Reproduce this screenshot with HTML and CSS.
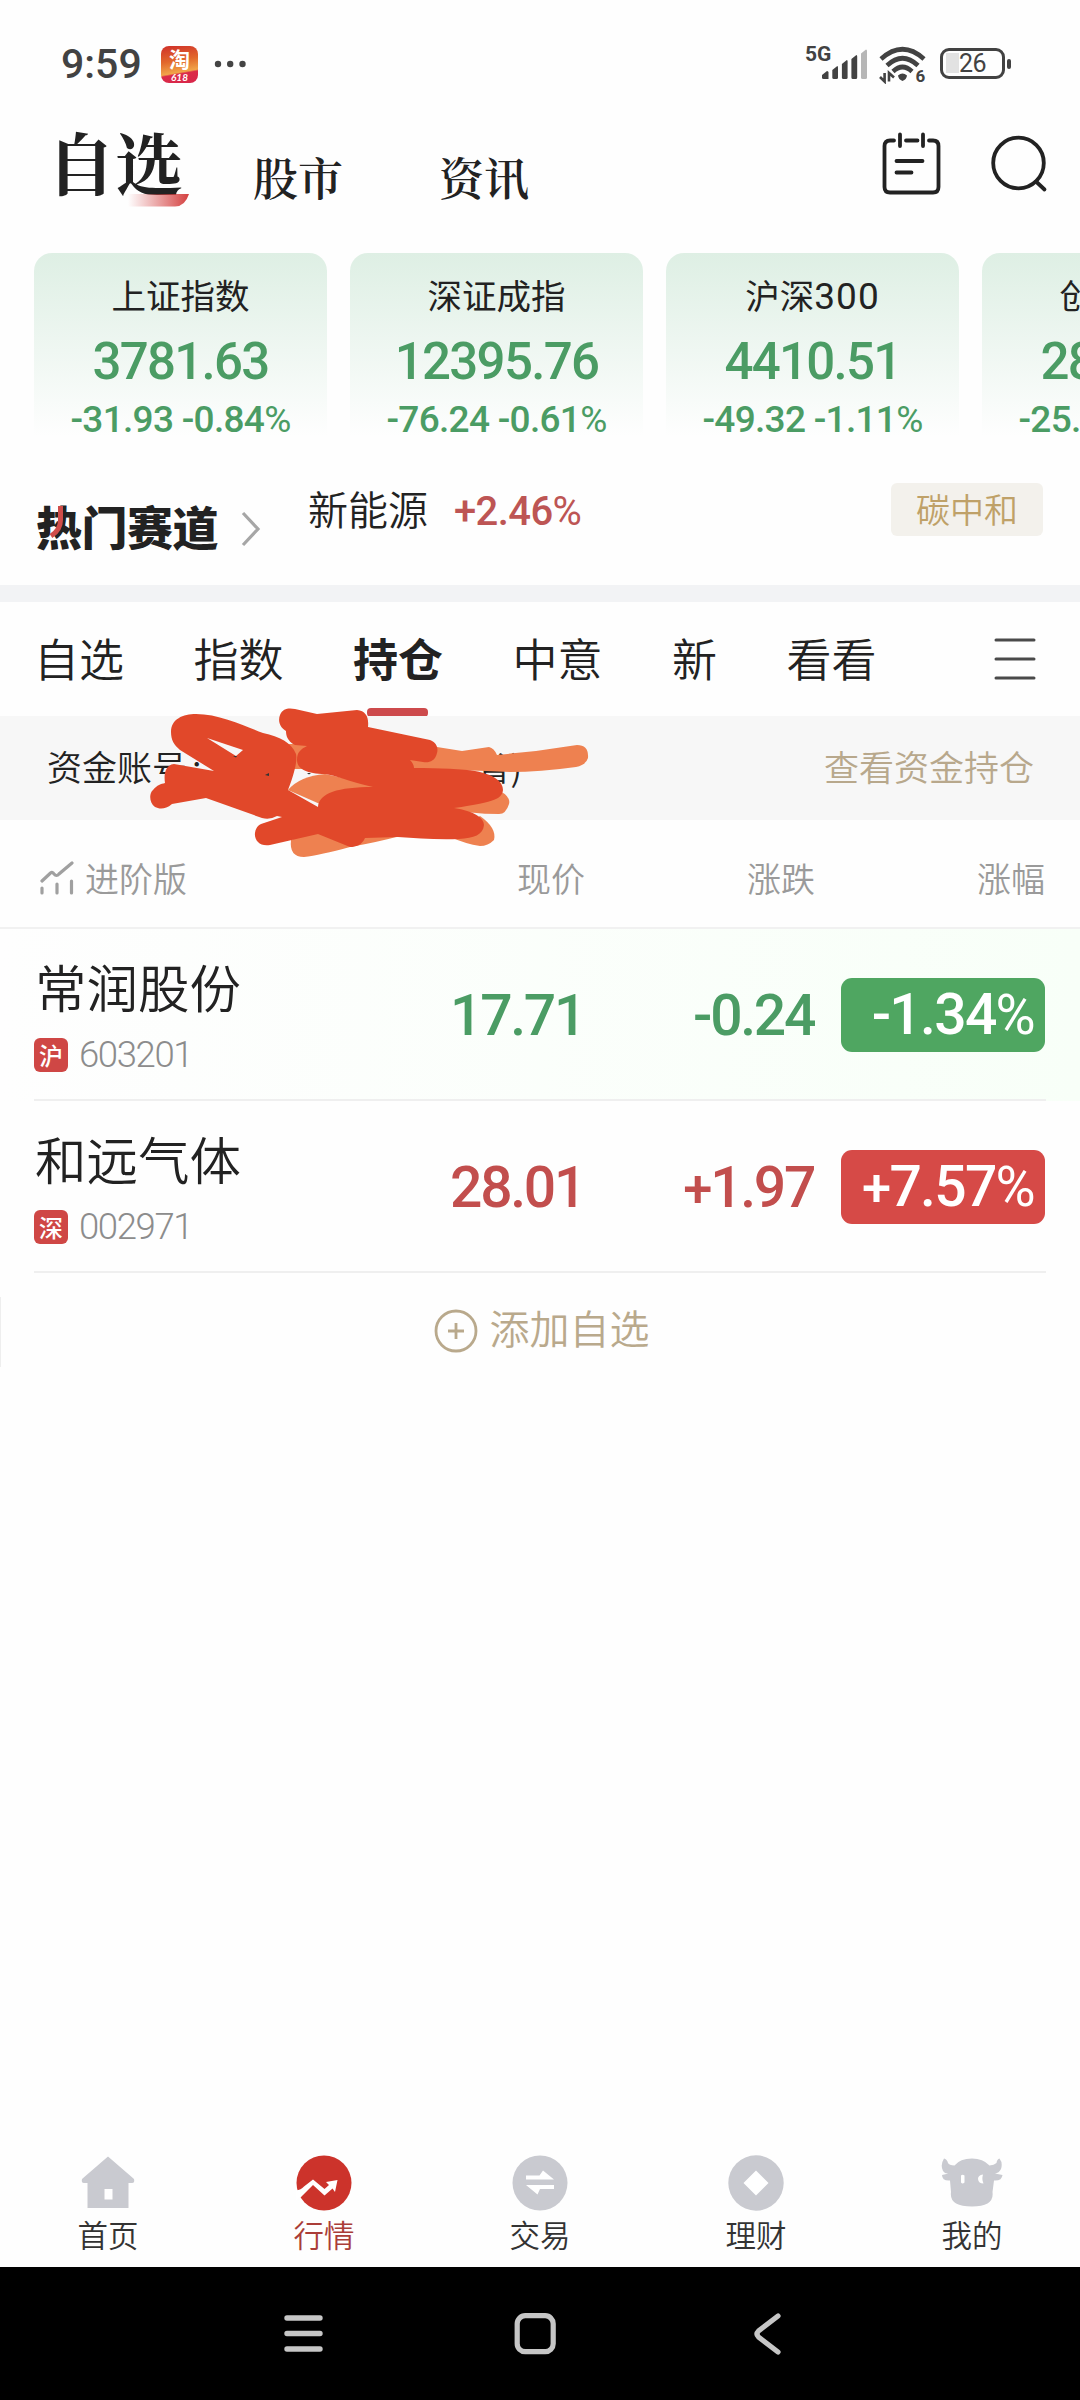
FILE: index.html
```html
<!DOCTYPE html>
<html lang="zh-CN">
<head>
<meta charset="utf-8">
<title>自选行情</title>
<link rel="stylesheet" href="styles.css">
</head>
<body>
<div class="screen">
  <header class="status">
    <span class="clock">9:59</span>
    <span class="app-icon"><b class="app-char">淘</b><i class="app-sale">618</i></span>
    <svg class="dots" width="34" height="8" viewBox="0 0 34 8"><g fill="#444"><circle cx="4" cy="4" r="3.2"/><circle cx="16.200" cy="4" r="3.200"/><circle cx="28.500" cy="4" r="3.200"/></g></svg>
    <span class="net">5G</span>
    <svg class="signal" width="46" height="32" viewBox="0 0 46 32"><g fill="#424242"><path d="M0 27l5-4q1.500 0 1.500 1.500V31h-5q-1.500 0-1.500-1.500z"/><path d="M10.300 22l5-4q.7 0 .7 1.500V29.500q0 1.500-1.500 1.500h-2.700q-1.500 0-1.500-1.500z"/><path d="M19.900 16l5-4q.7 0 .7 1.500V29.500q0 1.500-1.500 1.500h-2.700q-1.500 0-1.500-1.500z"/><path d="M29.400 11l5-4q.8 0 .8 1.500V29.500q0 1.500-1.500 1.500h-2.800q-1.500 0-1.500-1.500z"/></g><path fill="#b6b6b6" d="M39 5.500l5-4q1 0 1 1.500V29.500q0 1.500-1.500 1.500h-3q-1.500 0-1.500-1.500z"/></svg>
    <svg class="wifi" width="48" height="38" viewBox="0 0 48 38"><g fill="none" stroke="#424242" stroke-width="4.600"><path d="M2 13Q23.500-6.500 45 13"/><path d="M8 19.500Q23.500 5 39 19.500"/><path d="M14 25.500Q23.500 16.500 33 25.500"/></g><path d="M19 29.500q4.500-4 9 0q-.5 4-4.500 5.500q-4-1.500-4.500-5.500z" fill="#424242"/><path d="M5.600 27v8.500L1 31M10 35.500V27l5 4.500" fill="none" stroke="#424242" stroke-width="2.600"/><text x="36.500" y="35.500" class="wifi-gen">6</text></svg>
    <span class="battery"><span class="battery-text">26</span></span><span class="battery-tip"></span>
  </header>

  <nav class="top">
    <div class="top-tab top-tab-on">自选<svg class="swoosh" width="64" height="13" viewBox="0 0 64 13"><defs><linearGradient id="sw"><stop offset="0" stop-color="#d64a4c" stop-opacity="0"/><stop offset="1" stop-color="#d4403f"/></linearGradient></defs><path d="M0 0H61Q57 12.500 47 12.500H0z" fill="url(#sw)"/></svg></div>
    <div class="top-tab">股市</div>
    <div class="top-tab">资讯</div>
    <svg class="ico-note" width="60" height="64" viewBox="0 0 60 64"><g fill="none" stroke="#222" stroke-width="3.800" stroke-linecap="round"><path d="M13 8.500H9Q3.500 8.500 3.500 14V55Q3.500 60.500 9 60.500H52Q57.500 60.500 57.500 55V14Q57.500 8.500 52 8.500H48M25 8.500H36.500M19 2.500V14M42 2.500V14M15.500 29H41.500M15.500 40.500H30.500"/></g></svg>
    <svg class="ico-search" width="58" height="60" viewBox="0 0 58 60"><g fill="none" stroke="#222" stroke-width="3.800" stroke-linecap="round"><circle cx="27.500" cy="28" r="25.300"/><path d="M45 46.500L53.500 54.500"/></g></svg>
  </nav>

  <section class="cards">
    <div class="card"><div class="card-name">上证指数</div><div class="card-val">3781.63</div><div class="card-chg">-31.93 -0.84<i>%</i></div></div>
    <div class="card"><div class="card-name">深证成指</div><div class="card-val">12395.76</div><div class="card-chg">-76.24 -0.61<i>%</i></div></div>
    <div class="card"><div class="card-name">沪深<span class="num">300</span></div><div class="card-val">4410.51</div><div class="card-chg">-49.32 -1.11<i>%</i></div></div>
    <div class="card"><div class="card-name">创业板指</div><div class="card-val">2834.62</div><div class="card-chg">-25.09 -0.88<i>%</i></div></div>
  </section>

  <section class="hot">
    <div class="hot-title">热门赛道<svg class="hot-flame" width="22" height="34" viewBox="0 0 22 34"><path d="M12.500 0V14Q12.500 24 3 30" fill="none" stroke="#cf4d4a" stroke-width="5"/></svg></div>
    <svg class="hot-more" width="20" height="36" viewBox="0 0 20 36"><path d="M2 2L17 18L2 34" fill="none" stroke="#a6a6a6" stroke-width="3.200"/></svg>
    <div class="hot-name">新能源</div>
    <div class="hot-pct">+2.46<i>%</i></div>
    <div class="hot-tag">碳中和</div>
  </section>

  <div class="band"></div>

  <nav class="tabs">
    <span>自选</span><span>指数</span><span class="tab-on">持仓</span><span>中意</span><span>新</span><span>看看</span>
    <svg class="menu" width="42" height="42" viewBox="0 0 42 42"><path d="M2 2H40M2 21H40M2 40H40" stroke="#4a4a4a" stroke-width="3" stroke-linecap="round"/></svg>
  </nav>

  <section class="account">
    <span>资金账号<span class="colon">:</span></span><span class="account-end">省)</span>
    <a class="account-link">查看资金持仓</a>
    <svg class="marker" width="450" height="170" viewBox="145 700 450 170">
      <g fill="#ee8150"><path d="M400 741L437 747L462 751L489 747Q494 748 497 755L536 751L577 745Q589 745 588 758Q586 765 576 767Q540 772 510 772L486 771L400 768z"/><path d="M286 744H312V769H293z"/><path d="M288 790Q300 776 325 774L380 786L345 815z"/><path d="M445 808L500 791Q511 797 509 804Q506 814 499 814Q470 814 445 808z"/><path d="M480 816Q497 828 494 840Q488 846 480 846Q466 844 450 837z"/><path d="M291 840Q289 857 304 857Q320 855 350 847Q378 842 400 836L318 828z"/></g>
      <path fill="#e1482a" fill-rule="evenodd" d="M171 732C171 719 183 714 196 714C220 714 247 727 263 733C280 737 291 742 296 754C298 762 292 780 288 790L318 807C319 793 338 787 373 787C350 782 335 775 325 774C305 774 297 768 297 760C297 752 301 749 307 746L295 745C287 741 286 735 286 731C279 727 278 720 280 715C283 708 289 708 295 709L317 714L357 710C366 711 369 717 368 727L430 740C438 743 438 750 437 753C435 762 428 763 423 762L410 760C413 763 414 766 414 768C440 768 463 769 475 771C497 775 503 783 503 790C502 798 497 802 454 808C474 811 484 818 484 825C483 835 474 838 459 839C436 840 417 838 398 837L365 838C362 845 356 847 350 847L318 834L270 845C260 847 254 840 255 833C256 826 260 824 264 823L282 817L277 816Q270 820 262 818L206 798L172 804C165 810 159 809 155 807C149 803 149 793 153 790C157 785 161 784 165 783C164 777 164 765 174 764L214 771L180 750C174 745 171 740 171 732ZM207 738L243 750L236 756Z"/>
      <path fill="#333" d="M265 775l4-2v3zM233 756h4l-1 1.500zM307 773h4l-2 1.500z"/>
    </svg>
  </section>

  <div class="grid-row col-head">
    <div class="adv"><svg width="34" height="34" viewBox="0 0 34 34"><g fill="none" stroke="#a0a0a0" stroke-width="3.200" stroke-linecap="round"><path d="M2 20L10.500 12Q12.500 10.500 14 13Q16.500 16 19 13L32 2M2 27V32M17 23V32M31.500 20V32"/></g></svg>进阶版</div>
    <div class="mid">现价</div><div>涨跌</div><div>涨幅</div>
  </div>

  <div class="grid-row stock down">
    <div class="who"><div class="name">常润股份</div><div class="code"><b>沪</b>603201</div></div>
    <div class="price mid">17.71</div><div class="price">-0.24</div><div class="pct">-1.34<i>%</i></div>
  </div>
  <div class="grid-row stock up">
    <div class="who"><div class="name">和远气体</div><div class="code"><b>深</b>002971</div></div>
    <div class="price mid">28.01</div><div class="price"><span class="plus">+</span>1.97</div><div class="pct"><span class="plus">+</span>7.57<i>%</i></div>
  </div>

  <div class="add"><svg width="44" height="44" viewBox="0 0 44 44"><g fill="none" stroke="#b9a98c" stroke-width="2.800"><circle cx="22" cy="22" r="20"/><path d="M14 22H30M22 14V30"/></g></svg><span class="add-text">添加自选</span></div>

  <div class="space"></div>

  <nav class="bottom">
    <div><svg width="56" height="56" viewBox="0 0 56 56"><path fill="#c9cad0" d="M28 1.500L54 24Q55 28 52 28H48.500V53H7.500V28H4Q1 28 2 24z"/><path fill="#fff" d="M24.500 34h8v10.500h-8z"/></svg>首页</div>
    <div class="bottom-on"><svg width="56" height="56" viewBox="0 0 56 56"><circle cx="28" cy="28" r="27.500" fill="#cc332b"/><path d="M0 35.500Q5 35 8 31.500L17 24.500L28.500 34L33 30L30 27L41.500 25L39 37L36.500 33.500L28.500 40.500L17 30L5 42L0 46z" fill="#fff"/></svg>行情</div>
    <div><svg width="56" height="56" viewBox="0 0 56 56"><circle cx="28" cy="28" r="27.500" fill="#c9cad0"/><path fill="#fff" d="M14 20.500H27.500L31 15.500L42 24.500H14zM42 34H28L25.500 39.500L14 30H42z"/></svg>交易</div>
    <div><svg width="56" height="56" viewBox="0 0 56 56"><circle cx="28" cy="28" r="27.700" fill="#c9cad0"/><path fill="#fff" d="M28 15.500L40.500 28L28 40.500L15.500 28z"/></svg>理财</div>
    <div><svg width="62" height="56" viewBox="0 0 62 56"><path fill="#c9cad0" d="M3 3.500Q-1 10 2 16Q4 19 7.500 18.500L1 20Q1 26 9 25.500L10 37Q8 51.500 31 51.500Q53.500 51.500 51.500 37L53 25.500Q61 26 61.500 20L54 18.500Q58 18 60 14Q62 8 58.500 3.500Q56 4 55.500 8Q53 10 48.500 10.500Q42 3.500 31 3.500Q19 3.500 13.500 10.500Q8 10 7 8Q6 4 3 3.500z"/><path fill="#fff" d="M20 20.500q1.500-1.500 3.500 0v7q-2 2-3.500 0zM42 19.500q-1.500 5 .5 9q-5 0-5.500-4.500q0-4 5-4.500z"/></svg>我的</div>
  </nav>

  <footer class="sys">
    <svg width="42" height="42" viewBox="0 0 42 42"><path d="M4 5H37M4 20.500H37M4 36H37" stroke="#c6c6c6" stroke-width="5.400" stroke-linecap="round"/></svg>
    <svg width="42" height="42" viewBox="0 0 42 42"><rect x="3.200" y="2.700" width="36" height="36" rx="8" fill="none" stroke="#c6c6c6" stroke-width="5.200"/></svg>
    <svg class="sys-back" width="30" height="44" viewBox="0 0 30 44"><path d="M25 3L5.500 18Q2.500 21 5.500 24L25 39" fill="none" stroke="#c6c6c6" stroke-width="5.200" stroke-linecap="round"/></svg>
  </footer>
</div>
</body>
</html>
```
FILE: styles.css
```css
* { box-sizing: border-box; }
body { margin: 0; background: #fff; }
svg { display: block; flex: none; }
i { font-style: normal; }

.screen {
  width: 1080px;
  height: 2400px;
  display: flex;
  flex-direction: column;
  overflow: hidden;
  background: #fefefe;
  color: #222;
  font-family: "Noto Sans CJK SC", sans-serif;
  font-weight: 350;
  white-space: nowrap;
}
.screen > * { flex: none; }

/* status bar */
.status { height: 110px; padding: 46px 69px 0 61px; display: flex; align-items: flex-start; color: #424242; }
.clock { width: 100px; font: 500 41px/36px Roboto, sans-serif; }
.app-icon {
  width: 37px; height: 37px; border-radius: 8px; color: #fff;
  background: linear-gradient(170deg, #cf2f2a 0%, #e2682c 40%, #f1a54a 68%, #db2b48 72%, #d8264a 100%);
  display: flex; flex-direction: column; align-items: center;
}
.app-char { font-size: 21px; line-height: 25px; font-weight: 700; }
.app-sale { font: italic 700 10px/12px Lato, sans-serif; }
.dots { margin: 14px 0 0 16px; }
.net { margin-left: auto; width: 18px; font: 700 21px/16px Roboto, sans-serif; }
.signal { margin: 2px 0 0 -1px; }
.wifi { margin-left: 11px; }
.wifi-gen { font: 700 17px Roboto, sans-serif; fill: #424242; }
.battery {
  width: 65px; height: 31px; margin: 2px 0 0 13px; border: 3.500px solid #424242; border-radius: 9px;
  display: flex; justify-content: center; align-items: center;
  background: linear-gradient(#e2e2e2, #e2e2e2) 3px 2px / 13px 20px no-repeat;
}
.battery-text { font: 400 25px/26px Roboto, sans-serif; letter-spacing: -.5px; }
.battery-tip { width: 4px; height: 10px; margin: 13px 0 0 2px; border-radius: 2px; background: #424242; }

/* page switcher */
.top { height: 143px; padding-left: 47px; display: flex; align-items: flex-start; font-family: "Noto Serif CJK SC", "Noto Serif SC", "Noto Sans CJK SC", serif; font-weight: 600; }
.top-tab { font-size: 45px; line-height: 60px; margin-top: 37px; width: 186px; }
.top-tab-on { position: relative; font-size: 68px; line-height: 90px; width: 206px; margin-top: 6px; font-weight: 700; }
.swoosh { position: absolute; left: 81px; top: 78px; }
.ico-note { margin: 22px 0 0 auto; }
.ico-search { margin: 25px 31px 0 50px; }

/* index cards */
.cards { height: 187px; padding-left: 34px; display: flex; gap: 23px; overflow: hidden; }
.card { flex: none; width: 293px; border-radius: 18px 18px 0 0; text-align: center; background: linear-gradient(#deefe4, #fefefe 98%); color: #4b9c64; }
.card-name { margin-top: 21px; height: 40px; font-size: 34.500px; line-height: 40px; color: #222; font-weight: 400; }
.num { font-family: Roboto, sans-serif; font-size: 37px; letter-spacing: 1px; }
.card-val { height: 56px; margin-top: 20px; font: 500 51px/56px Roboto, sans-serif; letter-spacing: -1.700px; }
.card-chg { margin-top: 10px; font: 500 37px/40px Roboto, sans-serif; letter-spacing: -.7px; }
.card-chg i, .hot-pct i, .pct i { font-weight: 400; }

/* hot track strip */
.hot { height: 145px; padding: 0 37px 0 36px; display: flex; align-items: flex-start; }
.hot-title { position: relative; width: 205px; margin-top: 55px; font-size: 46px; line-height: 60px; font-weight: 900; letter-spacing: -.5px; }
.hot-flame { position: absolute; left: 12px; top: 11px; }
.hot-more { margin-top: 71px; }
.hot-name { margin: 38px 0 0 47px; font-size: 40px; line-height: 60px; }
.hot-pct { margin: 47px 0 0 26px; font: 500 40px/50px Roboto, sans-serif; letter-spacing: -.6px; color: #bd5554; }
.hot-tag { margin: 43px 0 0 auto; width: 152px; height: 53px; border-radius: 6px; text-align: center; font-size: 34px; line-height: 51px; background: #f3f1ec; color: #bfa168; }

.band { height: 17px; background: #f2f3f5; }

/* list tabs */
.tabs { height: 114px; padding: 0 44px 0 34px; display: flex; gap: 69.500px; align-items: flex-start; font-size: 45px; line-height: 112px; }
.tab-on { position: relative; font-weight: 700; }
.tab-on::after { content: ""; position: absolute; left: 14px; bottom: -3px; width: 61px; height: 9px; border-radius: 4px; background: #cd4a4c; }
.menu { margin: 36px 0 0 auto; }

/* account strip */
.account { position: relative; height: 104px; padding: 0 46px 0 47px; display: flex; align-items: flex-start; background: #f7f7f7; font-size: 35px; line-height: 99px; }
.colon { margin-left: 5px; }
.account-end { margin-left: 274px; }
.account-link { margin-left: auto; color: #b8a88c; }
.marker { position: absolute; left: 145px; top: -16px; z-index: 1; }

/* quotes */
.grid-row { display: grid; grid-template-columns: 1fr 240px 231px 230px; padding: 0 35px 0 34px; text-align: right; }
.mid { position: relative; left: 1px; }
.col-head { height: 109px; line-height: 115px; font-size: 34px; color: #9a9a9a; border-bottom: 2px solid #f1f1f1; }
.adv { display: flex; align-items: center; gap: 11px; padding-left: 6px; }
.stock { position: relative; height: 172px; align-items: start; }
.stock::after { content: ""; position: absolute; left: 34px; right: 34px; bottom: 0; height: 2px; background: #efefef; }
.down { background: linear-gradient(90deg, #fefefe, #f8fff8); color: #4b9c64; }
.up { color: #c24e4d; }
.who { text-align: left; color: #222; }
.name { height: 72px; margin-top: 19px; padding-left: 1px; font-size: 51.500px; line-height: 75px; }
.code { display: flex; align-items: center; gap: 11px; height: 36px; margin-top: 17px; font: 300 36.500px/36px Roboto, sans-serif; letter-spacing: -1.400px; color: #8c8c8c; }
.code b { width: 34px; height: 34px; border-radius: 6px; background: #cf4745; color: #fff; font: 500 24px/33px "Noto Sans CJK SC", sans-serif; letter-spacing: 0; text-align: center; }
.price { margin-top: 51px; padding-right: 1px; font: 500 57px/71px Roboto, sans-serif; letter-spacing: -2.300px; }
.plus { font-size: .92em; }
.pct { justify-self: end; width: 204px; height: 74px; margin-top: 49px; padding-right: 11px; border-radius: 11px; background: #4fa661; color: #fff; font: 500 57px/74px Roboto, sans-serif; letter-spacing: -1.700px; }
.pct i { font-size: .96em; }
.up .pct { background: #d64a47; }

.add { display: flex; align-items: center; justify-content: center; gap: 12px; height: 70px; margin-top: 24px; padding-left: 2px; border-left: 1px solid #eee; font-size: 40px; line-height: 60px; color: #b9a98c; }
.add svg { margin-bottom: 2px; }
.add-text { margin-bottom: 10px; }
.screen > .space { flex: 1 1 0; }

/* bottom navigation */
.bottom { height: 112px; display: flex; font-size: 30.500px; line-height: 44px; color: #333; }
.bottom > div { flex: 1; display: flex; flex-direction: column; align-items: center; gap: 1px; }
.bottom .bottom-on { color: #aa3d38; }

.sys { height: 133px; padding: 46px 0 0 283px; display: flex; align-items: flex-start; gap: 189px; background: #000; }
.sys-back { margin-left: 8px; }
```
